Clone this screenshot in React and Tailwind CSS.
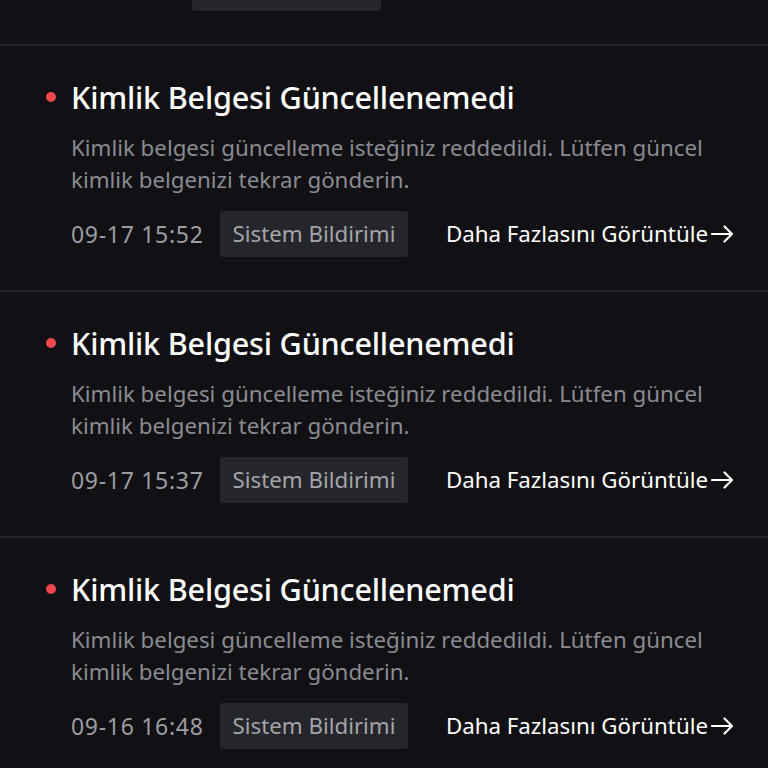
import React from 'react';

const items = [
  { time: '09-17 9:1' },
  { time: '09-17 15:52' },
  { time: '09-17 15:37' },
  { time: '09-16 16:48' },
];

const Arrow = () => (
  <svg width="23" height="18" viewBox="0 0 23 18" fill="none" className="ml-[3px]">
    <path d="M1 9H21M13.5 1.5L21 9L13.5 16.5" stroke="currentColor" strokeWidth="2.2" strokeLinecap="round" strokeLinejoin="round" />
  </svg>
);

const NoticeCard = ({ time }) => (
  <div className="border-t-2 border-[#232328] pl-[71px] pr-[34px] pt-[31px] pb-[33px]">
    <div className="flex items-center gap-[15px] -ml-[25px]">
      <span className="w-[10px] h-[10px] rounded-full bg-[#f0474f] shrink-0"></span>
      <h3 className="text-[30.6px] leading-[40px] font-medium text-white tracking-[-0.2px]">
        Kimlik Belgesi Güncellenemedi
      </h3>
    </div>
    <p className="mt-[15px] text-[22.3px] leading-[32px] text-[#8a8b92]">
      Kimlik belgesi güncelleme isteğiniz reddedildi. Lütfen güncel kimlik belgenizi tekrar gönderin.
    </p>
    <div className="mt-[15px] flex items-center">
      <span className="text-[23px] tracking-[0.7px] text-[#9c9da3]">{time}</span>
      <span className="ml-[16px] h-[46px] px-[13px] flex items-center rounded-[3px] bg-[#25262b] text-[22.3px] text-[#a3a4aa]">
        Sistem Bildirimi
      </span>
      <a className="ml-auto flex items-center text-[22.3px] text-white">
        Daha Fazlasını Görüntüle
        <Arrow />
      </a>
    </div>
  </div>
);

export default function App() {
  return (
    <div className="w-[768px] h-[768px] overflow-hidden bg-[#111115]" style={{ fontFamily: '"Noto Sans", "Open Sans", sans-serif' }}>
      <div className="-mt-[202px]">
        {items.map((it, i) => (
          <NoticeCard key={i} time={it.time} />
        ))}
      </div>
    </div>
  );
}
